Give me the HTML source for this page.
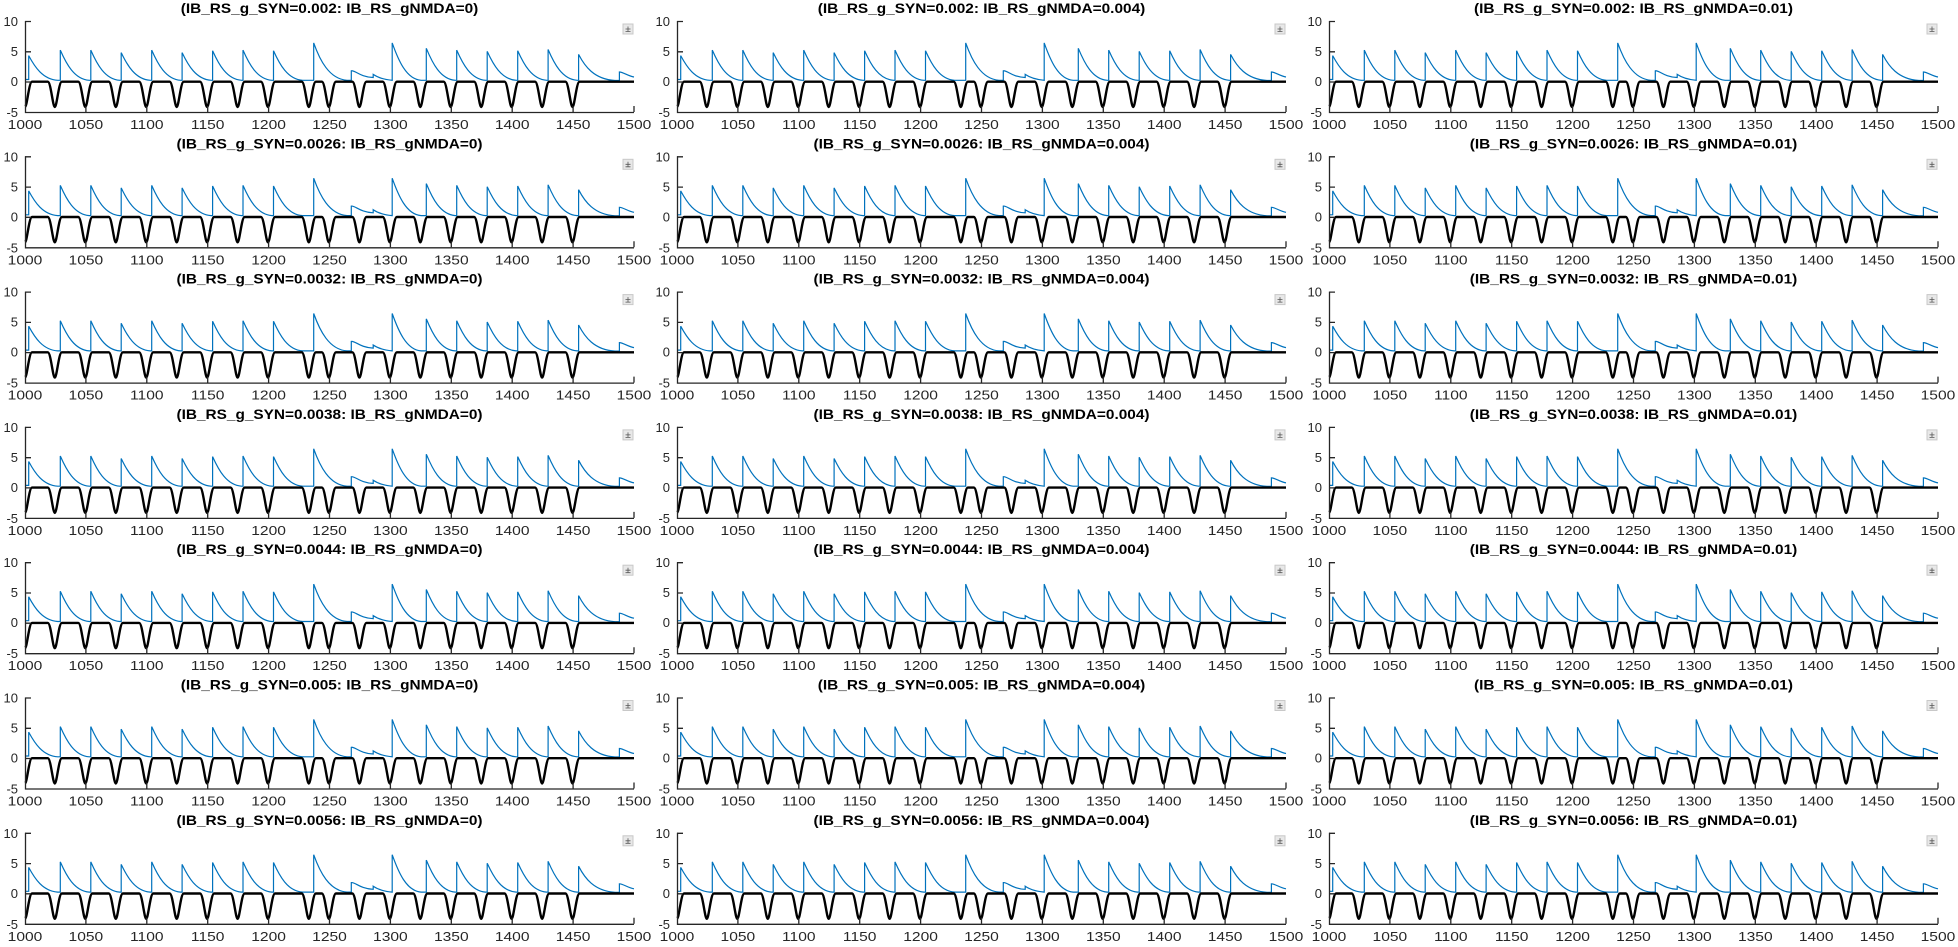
<!DOCTYPE html>
<html><head><meta charset="utf-8"><style>
html,body{margin:0;padding:0;background:#fff;width:1958px;height:947px;overflow:hidden}
svg{display:block}
text{font-family:"Liberation Sans",sans-serif;fill:#262626}
.t{font-weight:bold;font-size:14px;fill:#000}
.l{font-size:13px}
</style></head><body>
<svg width="1958" height="947" viewBox="0 0 1958 947">
<defs>
<path id="blu" fill="none" stroke="#0072bd" stroke-width="1.2" d="M0,58.5L3.7,58.5L3.7,34.6C9.7,45.8 17.7,58.3 32.7,59.3L35.3,59.3L35.3,29.1C41.3,42.8 49.3,58.3 64.3,59.3L65.8,59.3L65.8,29.1C71.8,42.8 79.8,58.3 94.8,59.3L96.2,59.3L96.2,31.6C102.2,44.2 110.2,58.3 125.2,59.3L126.7,59.3L126.7,29.1C132.7,42.8 140.7,58.3 155.7,59.3L157.1,59.3L157.1,31.6C163.1,44.2 171.1,58.3 186.1,59.3L187.6,59.3L187.6,29.7C193.6,43.1 201.6,58.3 216.6,59.3L218,59.3L218,29.1C224,42.8 232,58.3 247,59.3L248.5,59.3L248.5,29.7C254.5,43.1 262.5,58.3 277.5,59.3L288.7,59.3L288.7,21.9C294.7,38.8 304,58 322,59.3L326.3,59.3L326.3,49.8C330,49 335,56 348.2,56.5L348.2,53.4C352,56 358,58.5 367.2,59.3L367.2,21.9C373.2,38.8 381.2,58.3 396.2,59.3L401.3,59.3L401.3,27.3C407.3,41.8 415.3,58.3 430.3,59.3L431.7,59.3L431.7,29.1C437.7,42.8 445.7,58.3 460.7,59.3L462.2,59.3L462.2,30.4C468.2,43.5 476.2,58.3 491.2,59.3L492.7,59.3L492.7,29.7C498.7,43.1 506.7,58.3 521.7,59.3L523.1,59.3L523.1,28.5C529.1,42.5 537.1,58.3 552.1,59.3L553.6,59.3L553.6,33.4C559.6,45.1 569,58.3 590,59.5L594.4,59.5L594.4,51C598,51 603,55 609,56"/>
<path id="blk" fill="none" stroke="#000" stroke-width="2.4" d="M0,86C2,86 4,60.7 7,60.7L22.8,60.7C25.8,60.7 27.8,86 29.8,86C31.8,86 33.8,60.7 36.8,60.7L53.3,60.7C56.3,60.7 58.3,86 60.3,86C62.3,86 64.3,60.7 67.3,60.7L83.8,60.7C86.8,60.7 88.8,86 90.8,86C92.8,86 94.8,60.7 97.8,60.7L114.2,60.7C117.2,60.7 119.2,86 121.2,86C123.2,86 125.2,60.7 128.2,60.7L144.7,60.7C147.7,60.7 149.7,86 151.7,86C153.7,86 155.7,60.7 158.7,60.7L175.1,60.7C178.1,60.7 180.1,86 182.1,86C184.1,86 186.1,60.7 189.1,60.7L205.6,60.7C208.6,60.7 210.6,86 212.6,86C214.6,86 216.6,60.7 219.6,60.7L236,60.7C239,60.7 241,86 243,86C245,86 247,60.7 250,60.7L276.8,60.7C279.8,60.7 281.8,86 283.8,86C285.8,86 287.8,60.7 290.8,60.7L296.9,60.7C299.9,60.7 301.9,86 303.9,86C305.9,86 307.9,60.7 310.9,60.7L327.4,60.7C330.4,60.7 332.4,86 334.4,86C336.4,86 338.4,60.7 341.4,60.7L357.8,60.7C360.8,60.7 362.8,86 364.8,86C366.8,86 368.8,60.7 371.8,60.7L388.3,60.7C391.3,60.7 393.3,86 395.3,86C397.3,86 399.3,60.7 402.3,60.7L418.7,60.7C421.7,60.7 423.7,86 425.7,86C427.7,86 429.7,60.7 432.7,60.7L449.2,60.7C452.2,60.7 454.2,86 456.2,86C458.2,86 460.2,60.7 463.2,60.7L479.6,60.7C482.6,60.7 484.6,86 486.6,86C488.6,86 490.6,60.7 493.6,60.7L510.1,60.7C513.1,60.7 515.1,86 517.1,86C519.1,86 521.1,60.7 524.1,60.7L540.5,60.7C543.5,60.7 545.5,86 547.5,86C549.5,86 551.5,60.7 554.5,60.7L609,60.7"/>
<g id="ax">
<use href="#blu"/><use href="#blk"/>
<path d="M0.5,0V91.5H609" stroke="#262626" stroke-width="1.3" fill="none"/>
<path d="M0,0.5h6M0,30.8h6M0,61h6M60.9,91v-6M121.8,91v-6M182.7,91v-6M243.6,91v-6M304.5,91v-6M365.4,91v-6M426.3,91v-6M487.2,91v-6M548.1,91v-6M609,91v-6" stroke="#262626" stroke-width="1.3"/>
<rect x="598" y="3" width="10" height="10" fill="#e8e8e8" stroke="#c8c8c8"/>
<path d="M600.5,8h5M603,5.5v5M600.5,10.5h5" stroke="#555" stroke-width="0.8"/>
</g>
</defs>
<g transform="translate(25,21)"><use href="#ax"/><text class="t" transform="translate(304.5,-8) scale(1.1,1)" text-anchor="middle">(IB_RS_g_SYN=0.002: IB_RS_gNMDA=0)</text><text class="l" text-anchor="end"><tspan x="-7" y="5">10</tspan><tspan x="-7" y="35">5</tspan><tspan x="-7" y="65">0</tspan><tspan x="-7" y="96">-5</tspan></text><text class="l" text-anchor="middle" transform="scale(1.2,1)" y="108"><tspan x="0">1000</tspan><tspan x="50.75">1050</tspan><tspan x="101.5">1100</tspan><tspan x="152.25">1150</tspan><tspan x="203">1200</tspan><tspan x="253.75">1250</tspan><tspan x="304.5">1300</tspan><tspan x="355.25">1350</tspan><tspan x="406">1400</tspan><tspan x="456.75">1450</tspan><tspan x="507.5">1500</tspan></text></g>
<g transform="translate(677,21)"><use href="#ax"/><text class="t" transform="translate(304.5,-8) scale(1.1,1)" text-anchor="middle">(IB_RS_g_SYN=0.002: IB_RS_gNMDA=0.004)</text><text class="l" text-anchor="end"><tspan x="-7" y="5">10</tspan><tspan x="-7" y="35">5</tspan><tspan x="-7" y="65">0</tspan><tspan x="-7" y="96">-5</tspan></text><text class="l" text-anchor="middle" transform="scale(1.2,1)" y="108"><tspan x="0">1000</tspan><tspan x="50.75">1050</tspan><tspan x="101.5">1100</tspan><tspan x="152.25">1150</tspan><tspan x="203">1200</tspan><tspan x="253.75">1250</tspan><tspan x="304.5">1300</tspan><tspan x="355.25">1350</tspan><tspan x="406">1400</tspan><tspan x="456.75">1450</tspan><tspan x="507.5">1500</tspan></text></g>
<g transform="translate(1329,21)"><use href="#ax"/><text class="t" transform="translate(304.5,-8) scale(1.1,1)" text-anchor="middle">(IB_RS_g_SYN=0.002: IB_RS_gNMDA=0.01)</text><text class="l" text-anchor="end"><tspan x="-7" y="5">10</tspan><tspan x="-7" y="35">5</tspan><tspan x="-7" y="65">0</tspan><tspan x="-7" y="96">-5</tspan></text><text class="l" text-anchor="middle" transform="scale(1.2,1)" y="108"><tspan x="0">1000</tspan><tspan x="50.75">1050</tspan><tspan x="101.5">1100</tspan><tspan x="152.25">1150</tspan><tspan x="203">1200</tspan><tspan x="253.75">1250</tspan><tspan x="304.5">1300</tspan><tspan x="355.25">1350</tspan><tspan x="406">1400</tspan><tspan x="456.75">1450</tspan><tspan x="507.5">1500</tspan></text></g>
<g transform="translate(25,156.3)"><use href="#ax"/><text class="t" transform="translate(304.5,-8) scale(1.1,1)" text-anchor="middle">(IB_RS_g_SYN=0.0026: IB_RS_gNMDA=0)</text><text class="l" text-anchor="end"><tspan x="-7" y="5">10</tspan><tspan x="-7" y="35">5</tspan><tspan x="-7" y="65">0</tspan><tspan x="-7" y="96">-5</tspan></text><text class="l" text-anchor="middle" transform="scale(1.2,1)" y="108"><tspan x="0">1000</tspan><tspan x="50.75">1050</tspan><tspan x="101.5">1100</tspan><tspan x="152.25">1150</tspan><tspan x="203">1200</tspan><tspan x="253.75">1250</tspan><tspan x="304.5">1300</tspan><tspan x="355.25">1350</tspan><tspan x="406">1400</tspan><tspan x="456.75">1450</tspan><tspan x="507.5">1500</tspan></text></g>
<g transform="translate(677,156.3)"><use href="#ax"/><text class="t" transform="translate(304.5,-8) scale(1.1,1)" text-anchor="middle">(IB_RS_g_SYN=0.0026: IB_RS_gNMDA=0.004)</text><text class="l" text-anchor="end"><tspan x="-7" y="5">10</tspan><tspan x="-7" y="35">5</tspan><tspan x="-7" y="65">0</tspan><tspan x="-7" y="96">-5</tspan></text><text class="l" text-anchor="middle" transform="scale(1.2,1)" y="108"><tspan x="0">1000</tspan><tspan x="50.75">1050</tspan><tspan x="101.5">1100</tspan><tspan x="152.25">1150</tspan><tspan x="203">1200</tspan><tspan x="253.75">1250</tspan><tspan x="304.5">1300</tspan><tspan x="355.25">1350</tspan><tspan x="406">1400</tspan><tspan x="456.75">1450</tspan><tspan x="507.5">1500</tspan></text></g>
<g transform="translate(1329,156.3)"><use href="#ax"/><text class="t" transform="translate(304.5,-8) scale(1.1,1)" text-anchor="middle">(IB_RS_g_SYN=0.0026: IB_RS_gNMDA=0.01)</text><text class="l" text-anchor="end"><tspan x="-7" y="5">10</tspan><tspan x="-7" y="35">5</tspan><tspan x="-7" y="65">0</tspan><tspan x="-7" y="96">-5</tspan></text><text class="l" text-anchor="middle" transform="scale(1.2,1)" y="108"><tspan x="0">1000</tspan><tspan x="50.75">1050</tspan><tspan x="101.5">1100</tspan><tspan x="152.25">1150</tspan><tspan x="203">1200</tspan><tspan x="253.75">1250</tspan><tspan x="304.5">1300</tspan><tspan x="355.25">1350</tspan><tspan x="406">1400</tspan><tspan x="456.75">1450</tspan><tspan x="507.5">1500</tspan></text></g>
<g transform="translate(25,291.6)"><use href="#ax"/><text class="t" transform="translate(304.5,-8) scale(1.1,1)" text-anchor="middle">(IB_RS_g_SYN=0.0032: IB_RS_gNMDA=0)</text><text class="l" text-anchor="end"><tspan x="-7" y="5">10</tspan><tspan x="-7" y="35">5</tspan><tspan x="-7" y="65">0</tspan><tspan x="-7" y="96">-5</tspan></text><text class="l" text-anchor="middle" transform="scale(1.2,1)" y="108"><tspan x="0">1000</tspan><tspan x="50.75">1050</tspan><tspan x="101.5">1100</tspan><tspan x="152.25">1150</tspan><tspan x="203">1200</tspan><tspan x="253.75">1250</tspan><tspan x="304.5">1300</tspan><tspan x="355.25">1350</tspan><tspan x="406">1400</tspan><tspan x="456.75">1450</tspan><tspan x="507.5">1500</tspan></text></g>
<g transform="translate(677,291.6)"><use href="#ax"/><text class="t" transform="translate(304.5,-8) scale(1.1,1)" text-anchor="middle">(IB_RS_g_SYN=0.0032: IB_RS_gNMDA=0.004)</text><text class="l" text-anchor="end"><tspan x="-7" y="5">10</tspan><tspan x="-7" y="35">5</tspan><tspan x="-7" y="65">0</tspan><tspan x="-7" y="96">-5</tspan></text><text class="l" text-anchor="middle" transform="scale(1.2,1)" y="108"><tspan x="0">1000</tspan><tspan x="50.75">1050</tspan><tspan x="101.5">1100</tspan><tspan x="152.25">1150</tspan><tspan x="203">1200</tspan><tspan x="253.75">1250</tspan><tspan x="304.5">1300</tspan><tspan x="355.25">1350</tspan><tspan x="406">1400</tspan><tspan x="456.75">1450</tspan><tspan x="507.5">1500</tspan></text></g>
<g transform="translate(1329,291.6)"><use href="#ax"/><text class="t" transform="translate(304.5,-8) scale(1.1,1)" text-anchor="middle">(IB_RS_g_SYN=0.0032: IB_RS_gNMDA=0.01)</text><text class="l" text-anchor="end"><tspan x="-7" y="5">10</tspan><tspan x="-7" y="35">5</tspan><tspan x="-7" y="65">0</tspan><tspan x="-7" y="96">-5</tspan></text><text class="l" text-anchor="middle" transform="scale(1.2,1)" y="108"><tspan x="0">1000</tspan><tspan x="50.75">1050</tspan><tspan x="101.5">1100</tspan><tspan x="152.25">1150</tspan><tspan x="203">1200</tspan><tspan x="253.75">1250</tspan><tspan x="304.5">1300</tspan><tspan x="355.25">1350</tspan><tspan x="406">1400</tspan><tspan x="456.75">1450</tspan><tspan x="507.5">1500</tspan></text></g>
<g transform="translate(25,426.9)"><use href="#ax"/><text class="t" transform="translate(304.5,-8) scale(1.1,1)" text-anchor="middle">(IB_RS_g_SYN=0.0038: IB_RS_gNMDA=0)</text><text class="l" text-anchor="end"><tspan x="-7" y="5">10</tspan><tspan x="-7" y="35">5</tspan><tspan x="-7" y="65">0</tspan><tspan x="-7" y="96">-5</tspan></text><text class="l" text-anchor="middle" transform="scale(1.2,1)" y="108"><tspan x="0">1000</tspan><tspan x="50.75">1050</tspan><tspan x="101.5">1100</tspan><tspan x="152.25">1150</tspan><tspan x="203">1200</tspan><tspan x="253.75">1250</tspan><tspan x="304.5">1300</tspan><tspan x="355.25">1350</tspan><tspan x="406">1400</tspan><tspan x="456.75">1450</tspan><tspan x="507.5">1500</tspan></text></g>
<g transform="translate(677,426.9)"><use href="#ax"/><text class="t" transform="translate(304.5,-8) scale(1.1,1)" text-anchor="middle">(IB_RS_g_SYN=0.0038: IB_RS_gNMDA=0.004)</text><text class="l" text-anchor="end"><tspan x="-7" y="5">10</tspan><tspan x="-7" y="35">5</tspan><tspan x="-7" y="65">0</tspan><tspan x="-7" y="96">-5</tspan></text><text class="l" text-anchor="middle" transform="scale(1.2,1)" y="108"><tspan x="0">1000</tspan><tspan x="50.75">1050</tspan><tspan x="101.5">1100</tspan><tspan x="152.25">1150</tspan><tspan x="203">1200</tspan><tspan x="253.75">1250</tspan><tspan x="304.5">1300</tspan><tspan x="355.25">1350</tspan><tspan x="406">1400</tspan><tspan x="456.75">1450</tspan><tspan x="507.5">1500</tspan></text></g>
<g transform="translate(1329,426.9)"><use href="#ax"/><text class="t" transform="translate(304.5,-8) scale(1.1,1)" text-anchor="middle">(IB_RS_g_SYN=0.0038: IB_RS_gNMDA=0.01)</text><text class="l" text-anchor="end"><tspan x="-7" y="5">10</tspan><tspan x="-7" y="35">5</tspan><tspan x="-7" y="65">0</tspan><tspan x="-7" y="96">-5</tspan></text><text class="l" text-anchor="middle" transform="scale(1.2,1)" y="108"><tspan x="0">1000</tspan><tspan x="50.75">1050</tspan><tspan x="101.5">1100</tspan><tspan x="152.25">1150</tspan><tspan x="203">1200</tspan><tspan x="253.75">1250</tspan><tspan x="304.5">1300</tspan><tspan x="355.25">1350</tspan><tspan x="406">1400</tspan><tspan x="456.75">1450</tspan><tspan x="507.5">1500</tspan></text></g>
<g transform="translate(25,562.2)"><use href="#ax"/><text class="t" transform="translate(304.5,-8) scale(1.1,1)" text-anchor="middle">(IB_RS_g_SYN=0.0044: IB_RS_gNMDA=0)</text><text class="l" text-anchor="end"><tspan x="-7" y="5">10</tspan><tspan x="-7" y="35">5</tspan><tspan x="-7" y="65">0</tspan><tspan x="-7" y="96">-5</tspan></text><text class="l" text-anchor="middle" transform="scale(1.2,1)" y="108"><tspan x="0">1000</tspan><tspan x="50.75">1050</tspan><tspan x="101.5">1100</tspan><tspan x="152.25">1150</tspan><tspan x="203">1200</tspan><tspan x="253.75">1250</tspan><tspan x="304.5">1300</tspan><tspan x="355.25">1350</tspan><tspan x="406">1400</tspan><tspan x="456.75">1450</tspan><tspan x="507.5">1500</tspan></text></g>
<g transform="translate(677,562.2)"><use href="#ax"/><text class="t" transform="translate(304.5,-8) scale(1.1,1)" text-anchor="middle">(IB_RS_g_SYN=0.0044: IB_RS_gNMDA=0.004)</text><text class="l" text-anchor="end"><tspan x="-7" y="5">10</tspan><tspan x="-7" y="35">5</tspan><tspan x="-7" y="65">0</tspan><tspan x="-7" y="96">-5</tspan></text><text class="l" text-anchor="middle" transform="scale(1.2,1)" y="108"><tspan x="0">1000</tspan><tspan x="50.75">1050</tspan><tspan x="101.5">1100</tspan><tspan x="152.25">1150</tspan><tspan x="203">1200</tspan><tspan x="253.75">1250</tspan><tspan x="304.5">1300</tspan><tspan x="355.25">1350</tspan><tspan x="406">1400</tspan><tspan x="456.75">1450</tspan><tspan x="507.5">1500</tspan></text></g>
<g transform="translate(1329,562.2)"><use href="#ax"/><text class="t" transform="translate(304.5,-8) scale(1.1,1)" text-anchor="middle">(IB_RS_g_SYN=0.0044: IB_RS_gNMDA=0.01)</text><text class="l" text-anchor="end"><tspan x="-7" y="5">10</tspan><tspan x="-7" y="35">5</tspan><tspan x="-7" y="65">0</tspan><tspan x="-7" y="96">-5</tspan></text><text class="l" text-anchor="middle" transform="scale(1.2,1)" y="108"><tspan x="0">1000</tspan><tspan x="50.75">1050</tspan><tspan x="101.5">1100</tspan><tspan x="152.25">1150</tspan><tspan x="203">1200</tspan><tspan x="253.75">1250</tspan><tspan x="304.5">1300</tspan><tspan x="355.25">1350</tspan><tspan x="406">1400</tspan><tspan x="456.75">1450</tspan><tspan x="507.5">1500</tspan></text></g>
<g transform="translate(25,697.5)"><use href="#ax"/><text class="t" transform="translate(304.5,-8) scale(1.1,1)" text-anchor="middle">(IB_RS_g_SYN=0.005: IB_RS_gNMDA=0)</text><text class="l" text-anchor="end"><tspan x="-7" y="5">10</tspan><tspan x="-7" y="35">5</tspan><tspan x="-7" y="65">0</tspan><tspan x="-7" y="96">-5</tspan></text><text class="l" text-anchor="middle" transform="scale(1.2,1)" y="108"><tspan x="0">1000</tspan><tspan x="50.75">1050</tspan><tspan x="101.5">1100</tspan><tspan x="152.25">1150</tspan><tspan x="203">1200</tspan><tspan x="253.75">1250</tspan><tspan x="304.5">1300</tspan><tspan x="355.25">1350</tspan><tspan x="406">1400</tspan><tspan x="456.75">1450</tspan><tspan x="507.5">1500</tspan></text></g>
<g transform="translate(677,697.5)"><use href="#ax"/><text class="t" transform="translate(304.5,-8) scale(1.1,1)" text-anchor="middle">(IB_RS_g_SYN=0.005: IB_RS_gNMDA=0.004)</text><text class="l" text-anchor="end"><tspan x="-7" y="5">10</tspan><tspan x="-7" y="35">5</tspan><tspan x="-7" y="65">0</tspan><tspan x="-7" y="96">-5</tspan></text><text class="l" text-anchor="middle" transform="scale(1.2,1)" y="108"><tspan x="0">1000</tspan><tspan x="50.75">1050</tspan><tspan x="101.5">1100</tspan><tspan x="152.25">1150</tspan><tspan x="203">1200</tspan><tspan x="253.75">1250</tspan><tspan x="304.5">1300</tspan><tspan x="355.25">1350</tspan><tspan x="406">1400</tspan><tspan x="456.75">1450</tspan><tspan x="507.5">1500</tspan></text></g>
<g transform="translate(1329,697.5)"><use href="#ax"/><text class="t" transform="translate(304.5,-8) scale(1.1,1)" text-anchor="middle">(IB_RS_g_SYN=0.005: IB_RS_gNMDA=0.01)</text><text class="l" text-anchor="end"><tspan x="-7" y="5">10</tspan><tspan x="-7" y="35">5</tspan><tspan x="-7" y="65">0</tspan><tspan x="-7" y="96">-5</tspan></text><text class="l" text-anchor="middle" transform="scale(1.2,1)" y="108"><tspan x="0">1000</tspan><tspan x="50.75">1050</tspan><tspan x="101.5">1100</tspan><tspan x="152.25">1150</tspan><tspan x="203">1200</tspan><tspan x="253.75">1250</tspan><tspan x="304.5">1300</tspan><tspan x="355.25">1350</tspan><tspan x="406">1400</tspan><tspan x="456.75">1450</tspan><tspan x="507.5">1500</tspan></text></g>
<g transform="translate(25,832.8)"><use href="#ax"/><text class="t" transform="translate(304.5,-8) scale(1.1,1)" text-anchor="middle">(IB_RS_g_SYN=0.0056: IB_RS_gNMDA=0)</text><text class="l" text-anchor="end"><tspan x="-7" y="5">10</tspan><tspan x="-7" y="35">5</tspan><tspan x="-7" y="65">0</tspan><tspan x="-7" y="96">-5</tspan></text><text class="l" text-anchor="middle" transform="scale(1.2,1)" y="108"><tspan x="0">1000</tspan><tspan x="50.75">1050</tspan><tspan x="101.5">1100</tspan><tspan x="152.25">1150</tspan><tspan x="203">1200</tspan><tspan x="253.75">1250</tspan><tspan x="304.5">1300</tspan><tspan x="355.25">1350</tspan><tspan x="406">1400</tspan><tspan x="456.75">1450</tspan><tspan x="507.5">1500</tspan></text></g>
<g transform="translate(677,832.8)"><use href="#ax"/><text class="t" transform="translate(304.5,-8) scale(1.1,1)" text-anchor="middle">(IB_RS_g_SYN=0.0056: IB_RS_gNMDA=0.004)</text><text class="l" text-anchor="end"><tspan x="-7" y="5">10</tspan><tspan x="-7" y="35">5</tspan><tspan x="-7" y="65">0</tspan><tspan x="-7" y="96">-5</tspan></text><text class="l" text-anchor="middle" transform="scale(1.2,1)" y="108"><tspan x="0">1000</tspan><tspan x="50.75">1050</tspan><tspan x="101.5">1100</tspan><tspan x="152.25">1150</tspan><tspan x="203">1200</tspan><tspan x="253.75">1250</tspan><tspan x="304.5">1300</tspan><tspan x="355.25">1350</tspan><tspan x="406">1400</tspan><tspan x="456.75">1450</tspan><tspan x="507.5">1500</tspan></text></g>
<g transform="translate(1329,832.8)"><use href="#ax"/><text class="t" transform="translate(304.5,-8) scale(1.1,1)" text-anchor="middle">(IB_RS_g_SYN=0.0056: IB_RS_gNMDA=0.01)</text><text class="l" text-anchor="end"><tspan x="-7" y="5">10</tspan><tspan x="-7" y="35">5</tspan><tspan x="-7" y="65">0</tspan><tspan x="-7" y="96">-5</tspan></text><text class="l" text-anchor="middle" transform="scale(1.2,1)" y="108"><tspan x="0">1000</tspan><tspan x="50.75">1050</tspan><tspan x="101.5">1100</tspan><tspan x="152.25">1150</tspan><tspan x="203">1200</tspan><tspan x="253.75">1250</tspan><tspan x="304.5">1300</tspan><tspan x="355.25">1350</tspan><tspan x="406">1400</tspan><tspan x="456.75">1450</tspan><tspan x="507.5">1500</tspan></text></g>
</svg>
</body></html>
